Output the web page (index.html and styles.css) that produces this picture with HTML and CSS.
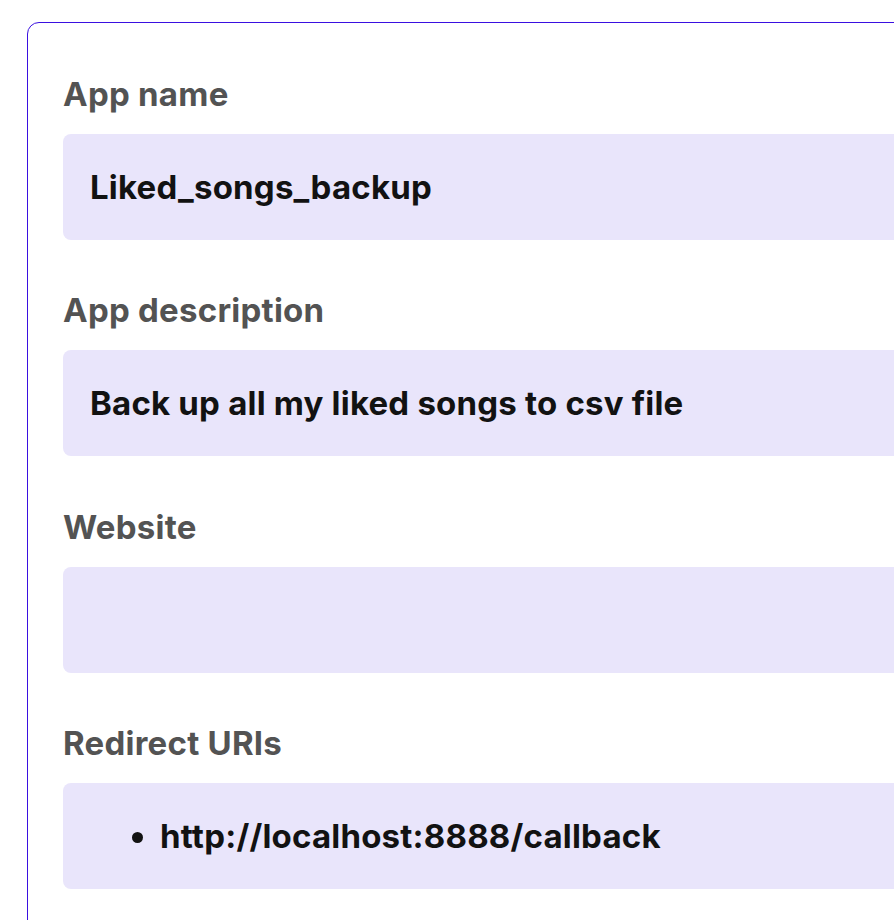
FILE: index.html
```html
<!DOCTYPE html>
<html>
<head>
<meta charset="utf-8">
<link rel="stylesheet" href="styles.css">
</head>
<body>
<div class="card">
  <div class="field">
    <div class="label">App name</div>
    <div class="value">Liked_songs_backup</div>
  </div>
  <div class="field">
    <div class="label">App description</div>
    <div class="value">Back up all my liked songs to csv file</div>
  </div>
  <div class="field">
    <div class="label">Website</div>
    <div class="value"></div>
  </div>
  <div class="field">
    <div class="label">Redirect URIs</div>
    <div class="value list">
      <ul>
        <li>http://localhost:8888/callback</li>
      </ul>
    </div>
  </div>
</div>
</body>
</html>
```
FILE: styles.css
```css
html, body {
  margin: 0;
  padding: 0;
  background: #ffffff;
  overflow: hidden;
}
body {
  width: 894px;
  height: 920px;
  font-family: Inter, "Noto Sans", sans-serif;
}
.card {
  margin: 22px 0 0 27px;
  width: 1000px;
  border: 1px solid #3a10e0;
  border-radius: 12px;
  padding: 51px 0 40px 35px;
  box-sizing: border-box;
}
.field {
  display: flex;
  flex-direction: column;
  gap: 20px;
  margin-bottom: 50.33px;
}
.label {
  font-size: 33px;
  line-height: 40px;
  font-weight: 700;
  letter-spacing: 0.25px;
  color: #535353;
}
.value {
  background: #e9e5fb;
  border-radius: 8px;
  height: 106px;
  box-sizing: border-box;
  padding: 0 27px;
  display: flex;
  align-items: center;
  font-size: 33px;
  font-weight: 700;
  letter-spacing: 0.2px;
  color: #121212;
}
.value ul {
  margin: 0;
  padding-left: 70px;
}
```
